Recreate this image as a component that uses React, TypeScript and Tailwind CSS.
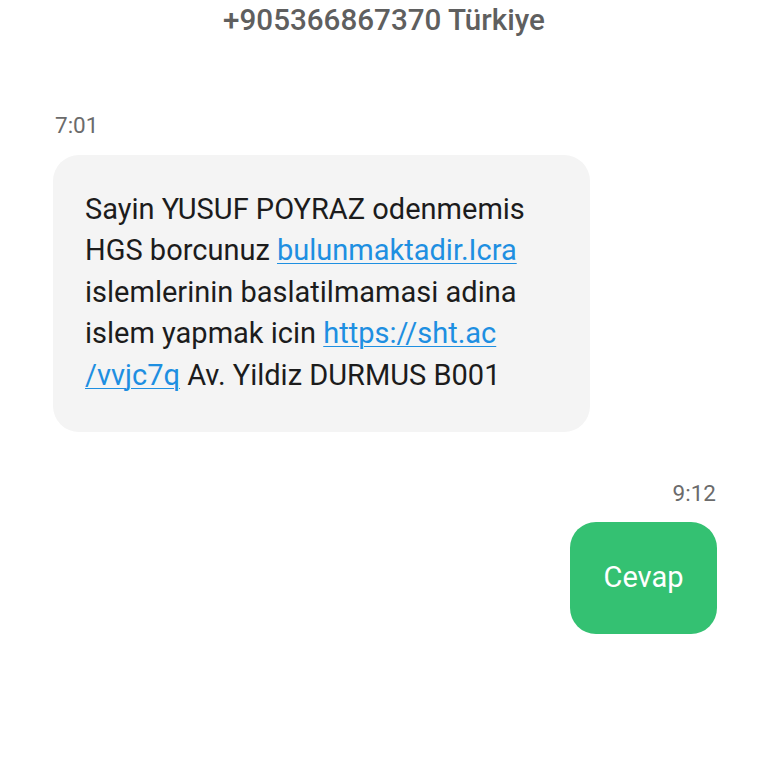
export default function App() {
  const link = 'text-[#1e8fe1] underline decoration-1 underline-offset-[3px]';

  return (
    <div className="w-[768px] h-[768px] bg-white overflow-hidden font-['Roboto','Liberation_Sans',sans-serif]">
      <div className="h-[42px] flex items-center justify-center">
        <h1 className="text-[29.6px] font-medium text-[#5f5f5f] leading-none">
          +905366867370 Türkiye
        </h1>
      </div>

      <div className="px-[53px] pt-[72px]">
        <p className="text-[22.5px] text-[#6b6b6b] leading-none pl-[2px]">7:01</p>

        <div className="mt-[18px] w-[537px] h-[277px] rounded-[26px] bg-[#f4f4f4] pl-[32px] pt-[34px] text-[29px] leading-[41.5px] text-[#1c1c1c]">
          <div>Sayin YUSUF POYRAZ odenmemis</div>
          <div>
            HGS borcunuz <span className={link}>bulunmaktadir.Icra</span>
          </div>
          <div>islemlerinin baslatilmamasi adina</div>
          <div>
            islem yapmak icin <span className={link}>https://sht.ac</span>
          </div>
          <div>
            <span className={link}>/vvjc7q</span> Av. Yildiz DURMUS B001
          </div>
        </div>
      </div>

      <div className="flex flex-col items-end pr-[51px] mt-[50px]">
        <p className="text-[22.5px] text-[#6b6b6b] leading-none pr-[1px]">9:12</p>
        <div className="mt-[18px] w-[147px] h-[112px] rounded-[26px] bg-[#34c172] flex items-center justify-center">
          <span className="text-[29px] text-white">Cevap</span>
        </div>
      </div>
    </div>
  );
}
